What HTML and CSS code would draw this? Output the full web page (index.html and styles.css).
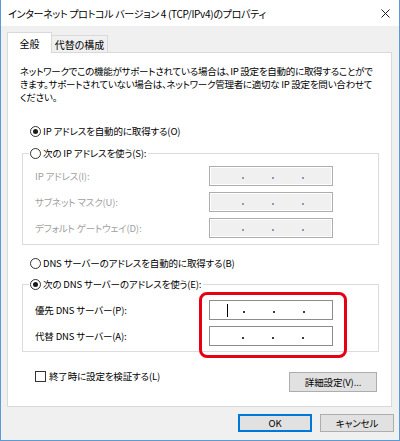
FILE: index.html
```html
<!DOCTYPE html>
<html lang="ja">
<head>
<meta charset="utf-8">
<title>インターネット プロトコル バージョン 4 (TCP/IPv4)のプロパティ</title>
<link rel="stylesheet" href="styles.css">
</head>
<body>
<div class="window">
  <div class="titlebar">
    <span class="title">インターネット プロトコル バージョン 4 (TCP/IPv4)のプロパティ</span>
    <svg class="close" width="9" height="9" viewBox="0 0 9 9"><path d="M0.5 0.5L8.5 8.5M8.5 0.5L0.5 8.5" stroke="#1a1a1a" stroke-width="1" fill="none"/></svg>
  </div>
  <div class="content">
    <div class="tabs">
      <div class="tab active">全般</div>
      <div class="tab">代替の構成</div>
    </div>
    <div class="panel">
      <p class="desc">ネットワークでこの機能がサポートされている場合は、IP 設定を自動的に取得することがで<br>きます。サポートされていない場合は、ネットワーク管理者に適切な IP 設定を問い合わせて<br>ください。</p>
      <div class="option first-option"><span class="radio checked"></span>IP アドレスを自動的に取得する(O)</div>
      <fieldset class="group group-ip">
        <legend class="legend"><span class="radio"></span>次の IP アドレスを使う(S):</legend>
        <div class="rows rows-ip">
          <div class="row disabled"><span class="lbl">IP アドレス(I):</span><span class="ipbox"><i class="dot"></i><i class="dot"></i><i class="dot"></i></span></div>
          <div class="row disabled"><span class="lbl">サブネット マスク(U):</span><span class="ipbox"><i class="dot"></i><i class="dot"></i><i class="dot"></i></span></div>
          <div class="row disabled"><span class="lbl">デフォルト ゲートウェイ(D):</span><span class="ipbox"><i class="dot"></i><i class="dot"></i><i class="dot"></i></span></div>
        </div>
      </fieldset>
      <div class="option dns-option"><span class="radio"></span>DNS サーバーのアドレスを自動的に取得する(B)</div>
      <fieldset class="group group-dns">
        <legend class="legend"><span class="radio checked"></span>次の DNS サーバーのアドレスを使う(E):</legend>
        <div class="rows rows-dns">
          <div class="row"><span class="lbl">優先 DNS サーバー(P):</span><span class="ipbox enabled with-caret"><i class="caret"></i><i class="dot"></i><i class="dot"></i><i class="dot"></i></span></div>
          <div class="row"><span class="lbl">代替 DNS サーバー(A):</span><span class="ipbox enabled"><i class="dot"></i><i class="dot"></i><i class="dot"></i></span></div>
        </div>
      </fieldset>
      <div class="bottom-row">
        <div class="check-row"><span class="checkbox"></span>終了時に設定を検証する(L)</div>
        <div class="btn btn-adv">詳細設定(V)...</div>
      </div>
      <div class="highlight"></div>
    </div>
    <div class="buttons">
      <div class="btn btn-main default">OK</div>
      <div class="btn btn-main">キャンセル</div>
    </div>
  </div>
</div>
</body>
</html>
```
FILE: styles.css
```css
* { box-sizing: border-box; }
html, body { margin: 0; padding: 0; }
body {
  width: 400px;
  height: 441px;
  background: #f0f0f0;
  font-family: "Noto Sans CJK JP", "Noto Sans", sans-serif;
  font-size: 9.5px;
  letter-spacing: -0.15px;
  line-height: 13px;
  color: #000;
  font-feature-settings: "palt";
}
.window {
  width: 400px;
  height: 441px;
  border-left: 1px solid #5b9bd5;
  border-right: 1px solid #5b9bd5;
  border-bottom: 1px solid #5b9bd5;
  background: #f0f0f0;
  display: flex;
  flex-direction: column;
}
.titlebar {
  height: 26px;
  background: #fff;
  display: flex;
  align-items: center;
  justify-content: space-between;
  padding: 1px 9px 0 7px;
}
.title { font-size: 10px; letter-spacing: -0.3px; white-space: nowrap; }
.close { display: block; }
.content {
  padding: 6px 0 0 6px;
  display: flex;
  flex-direction: column;
}
.tabs {
  display: flex;
  align-items: flex-end;
  height: 20px;
}
.tab {
  height: 17px;
  border: 1px solid #d9d9d9;
  border-bottom: none;
  background: #f0f0f0;
  display: flex;
  align-items: center;
  justify-content: center;
  width: 56px;
  border-left: none;
  font-size: 10px;
  letter-spacing: 0;
}
.tab.active {
  width: 45px;
  height: 21px;
  margin-bottom: -1px;
  background: #fff;
  border-left: 1px solid #d9d9d9;
  position: relative;
  z-index: 1;
}
.panel {
  position: relative;
  width: 385px;
  height: 355px;
  border: 1px solid #d9d9d9;
  background: #fff;
  padding: 12px 12px 0 12px;
  display: flex;
  flex-direction: column;
}
.desc {
  margin: 0;
  white-space: nowrap;
  letter-spacing: -0.26px;
}
.option {
  display: flex;
  align-items: center;
  height: 13px;
  white-space: nowrap;
}
.first-option { margin: 21px 0 0 10px; }
.dns-option { margin: 12px 0 0 10px; }
.radio {
  width: 11px;
  height: 11px;
  border: 1px solid #333;
  border-radius: 50%;
  margin-right: 2px;
  display: flex;
  align-items: center;
  justify-content: center;
  flex: none;
  background: #fff;
}
.radio.checked::after {
  content: "";
  width: 5px;
  height: 5px;
  border-radius: 50%;
  background: #1a1a1a;
}
.group {
  margin: 9px 0 0 2px;
  padding: 0;
  border: 1px solid #dcdcdc;
  min-width: 0;
}
.group-dns { margin-top: 8px; }
.legend {
  margin-left: 6px;
  padding: 0 2px 0 1px;
  display: flex;
  align-items: center;
  height: 13px;
  white-space: nowrap;
}
.rows {
  display: flex;
  flex-direction: column;
  gap: 6px;
  padding: 6px 0 6px 12px;
}
.rows-dns { padding: 9px 0 5px 12px; }
.row {
  display: flex;
  align-items: center;
  height: 20px;
}
.lbl { width: 174px; white-space: nowrap; }
.row.disabled .lbl { color: #a0a0a0; }
.ipbox {
  width: 124px;
  height: 20px;
  border: 1px solid #adadad;
  background: #f0f0f0;
  box-shadow: inset 0 0 0 1px #fff;
  display: flex;
  align-items: center;
  padding-left: 32px;
  gap: 28px;
}
.dot {
  width: 2px;
  height: 2px;
  background: #8d9bb3;
  margin-top: 3px;
}
.ipbox.enabled {
  background: #fff;
  border-color: #8c8c8c;
  box-shadow: none;
}
.ipbox.enabled .dot { background: #3a3a3a; }
.ipbox.with-caret { padding-left: 17px; }
.ipbox.with-caret .caret + .dot { margin-left: -13px; }
.caret {
  width: 1px;
  height: 13px;
  background: #000;
}
.bottom-row {
  display: flex;
  justify-content: space-between;
  align-items: flex-start;
  margin-top: 18px;
}
.check-row {
  display: flex;
  align-items: center;
  height: 13px;
  margin-left: 15px;
  white-space: nowrap;
}
.checkbox {
  width: 11px;
  height: 11px;
  border: 1px solid #333;
  background: #fff;
  margin-right: 3px;
}
.btn {
  display: flex;
  align-items: center;
  justify-content: center;
  background: #e1e1e1;
  border: 1px solid #adadad;
  white-space: nowrap;
}
.btn-adv {
  width: 88px;
  height: 20px;
  margin-top: 2px;
  margin-right: 2px;
}
.buttons {
  display: flex;
  justify-content: flex-end;
  gap: 8px;
  margin-top: 7px;
  padding-right: 5px;
}
.btn-main {
  width: 74px;
  height: 18px;
}
.btn.default {
  border: 1px solid #0078d7;
  box-shadow: inset 0 0 0 1px #0078d7;
}
.highlight {
  position: absolute;
  left: 191px;
  top: 239px;
  width: 148px;
  height: 66px;
  border: 3px solid #e60012;
  border-radius: 8px;
}
```
